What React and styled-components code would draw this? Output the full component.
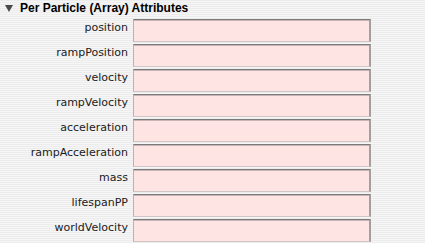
import styled, { createGlobalStyle } from "styled-components";

const GlobalStyle = createGlobalStyle`
    html, body {
        margin: 0;
        padding: 0;
    }
    body {
        width: 425px;
        height: 243px;
        overflow: hidden;
        font-family: "DejaVu Sans", "Liberation Sans", sans-serif;
        color: #000;
        background: repeating-linear-gradient(
            to bottom,
            #ececec 0px,
            #ececec 1px,
            #f6f6f6 1px,
            #f6f6f6 2px
        );
    }
`;

const attributes = [
    "position",
    "rampPosition",
    "velocity",
    "rampVelocity",
    "acceleration",
    "rampAcceleration",
    "mass",
    "lifespanPP",
    "worldVelocity",
];

const App = () => {
    return (
        <>
            <GlobalStyle />
            <Panel>
                <Header>
                    <Triangle viewBox="0 0 8 7">
                        <path d="M0 0 H8 L4 7 Z" fill="#4a4a4a" />
                    </Triangle>
                    <span>Per Particle (Array) Attributes</span>
                </Header>
                <Rows>
                    {attributes.map((name) => (
                        <Row key={name}>
                            <Label>{name}</Label>
                            <Field />
                        </Row>
                    ))}
                </Rows>
            </Panel>
        </>
    );
};

const Panel = styled.div`
    display: flex;
    flex-direction: column;
`;

const Header = styled.div`
    height: 19px;
    display: flex;
    align-items: flex-start;
    gap: 7px;
    padding: 1px 0 0 5px;
    box-sizing: border-box;
    font-family: "Liberation Sans", Arial, sans-serif;
    font-size: 12px;
    font-weight: bold;
    line-height: 14px;
`;

const Triangle = styled.svg`
    width: 8px;
    height: 7px;
    margin-top: 4px;
`;

const Rows = styled.div`
    display: flex;
    flex-direction: column;
    gap: 2px;
`;

const Row = styled.div`
    display: grid;
    grid-template-columns: 133px 238px;
    height: 23px;
`;

const Label = styled.div`
    text-align: right;
    padding: 2px 5px 0 0;
    font-size: 11px;
    line-height: 14px;
    color: #1a1a1a;
`;

const Field = styled.div`
    box-sizing: border-box;
    background: #ffe4e4;
    border-top: 1px solid #7a7a7a;
    border-left: 1px solid #b4b4b4;
    border-right: 2px solid #a0a0a0;
    border-bottom: 1px solid #d0c4c4;
    box-shadow: inset 0 1px 0 #c8b4b4;
`;

export default App;
